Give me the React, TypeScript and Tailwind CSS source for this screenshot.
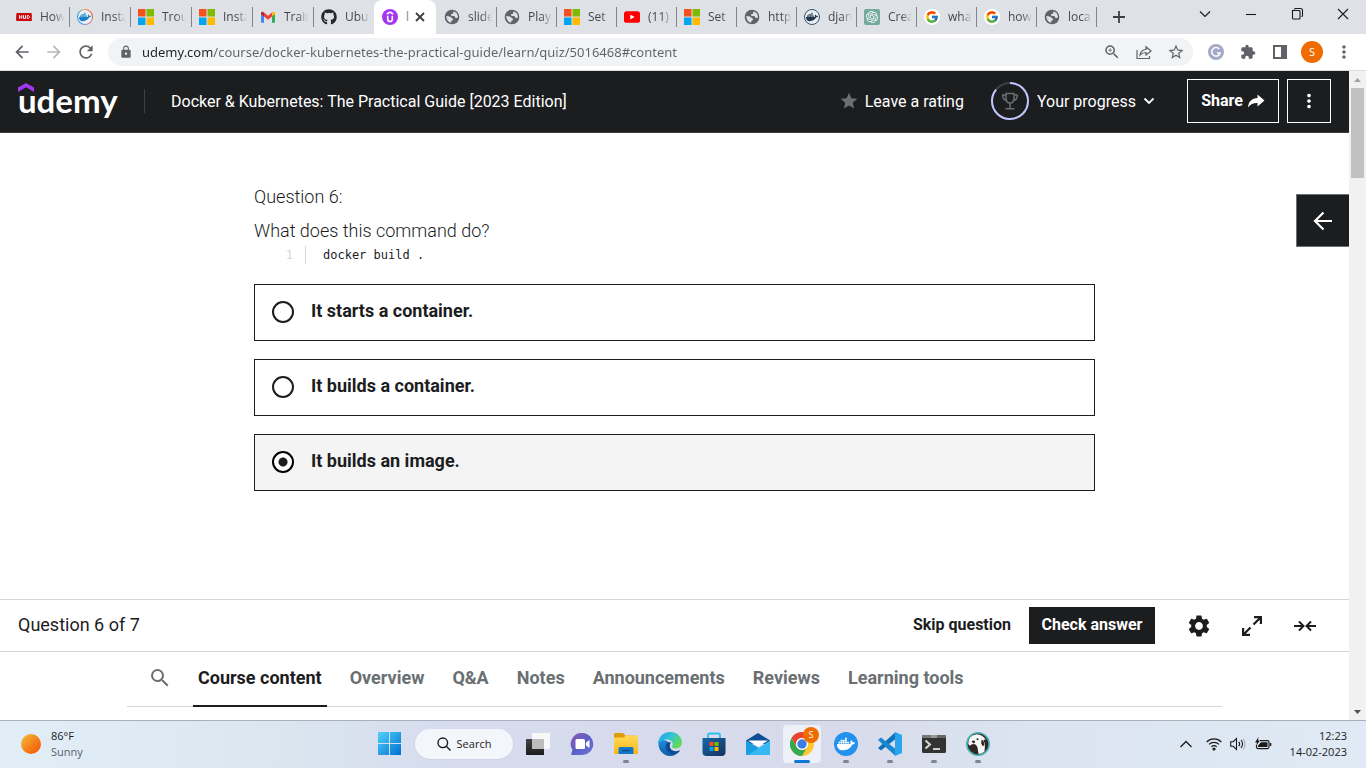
import React, { useState } from "react";
import {
  MdArrowBack, MdArrowForward, MdRefresh, MdLock, MdZoomIn, MdStarBorder, MdExtension, MdMoreVert,
  MdSettings, MdSearch, MdStar,
} from "react-icons/md";
import { FaGithub, FaDocker } from "react-icons/fa";
import { FcGoogle } from "react-icons/fc";
import { SiOpenai } from "react-icons/si";

const ui = "font-['Open_Sans','Noto_Sans',sans-serif]";
const brand = "font-[Roboto,'Liberation_Sans',sans-serif]";

/* ---------- favicons ---------- */

const Microsoft = () => (
  <svg viewBox="0 0 16 16" className="size-4">
    <path fill="#f4511e" d="M0 0h7.5v7.5H0z" />
    <path fill="#80bb02" d="M8.5 0H16v7.5H8.5z" />
    <path fill="#03a5f0" d="M0 8.5h7.5V16H0z" />
    <path fill="#ffb902" d="M8.5 8.5H16V16H8.5z" />
  </svg>
);

const Globe = () => (
  <svg viewBox="0 0 16 16" className="size-4">
    <circle cx="8" cy="8" r="7.300" fill="#5f6368" />
    <path fill="#dee1e6" d="M9.500 2.300 12.500 4Q14 6 14 8.500l-2.300.7-1-1.900-3.500-.5-.2-1.500 2-.6zM2.200 7l3.600.4 2.700 2 .8 1.400-1.800 1-.5 2Q2.500 12.500 2.200 7z" />
  </svg>
);

const Hud = () => (
  <svg viewBox="0 0 16 16" className="size-4">
    <path fill="#c80a10" d="M1.2 4h13.6q1 0 1 1v7H1q-1 0-1-1l.3-6q0-1 .9-1z" />
    <path fill="none" stroke="#fff" strokeWidth=".9" d="M3.500 6.200v3.600M5.800 6.200v3.600M3.500 8h2.300M7.500 6.200v3.200h2V6.200M11.200 6.600v2.800h1.300l.8-.7V7.200l-.8-.6z" />
  </svg>
);

const DockerRing = () => (
  <span className="flex size-4 items-center justify-center rounded-full bg-[conic-gradient(#ff8a3c,#f25022,#e07a9a,#3d9ae8,#2b9be8,#f5b45c)]">
    <span className="flex size-3.5 items-center justify-center rounded-full bg-[#e6f1fa]">
      <FaDocker className="size-3 text-[#1d7fc4]" />
    </span>
  </span>
);

const DockerDark = () => (
  <span className="flex size-4 items-center justify-center rounded-full border-[1.5px] border-[#33566f] bg-[#e9eff3]">
    <FaDocker className="size-3 text-[#22384d]" />
  </span>
);

const Gmail = () => (
  <svg viewBox="0 0 16 16" className="size-4">
    <path fill="#4285f4" d="M1 4v9q0 .7.8.7H4V7z" />
    <path fill="#34a853" d="M15 4v9q0 .7-.8.7H12V7z" />
    <path fill="#ea4335" d="M4 3.6 8 6.8l4-3.2v4L8 10.8 4 7.6z" />
    <path fill="#c5221f" d="M1 4.2C1 2.6 2.8 2.200 3.800 3.400L4 3.600v4L1 5.300z" />
    <path fill="#fbbc04" d="M15 4.2c0-1.600-1.800-2-2.800-.8l-.2.2v4l3-2.300z" />
  </svg>
);

const UdemyIcon = () => (
  <svg viewBox="0 0 16 16" className="size-4">
    <circle cx="8" cy="8" r="8" fill="#a435f0" />
    <path fill="none" stroke="#fff" strokeWidth="1.6" d="M4.800 5 8 3.100 11.200 5M5.700 6.700v3.500a2.300 2.300 0 0 0 4.600 0V6.700" />
  </svg>
);

const YouTube = () => (
  <svg viewBox="0 0 16 16" className="size-4">
    <rect y="2.200" width="16" height="11.600" rx="2.600" fill="#f00" />
    <path fill="#fff" d="M6.300 5.500v5l4.300-2.500z" />
  </svg>
);

const OpenAi = () => (
  <span className="flex size-4 items-center justify-center rounded-xs bg-[#75a99c]">
    <SiOpenai className="size-3 text-white" />
  </span>
);

const Google = () => (
  <span className="flex size-4 items-center justify-center rounded-full bg-white">
    <FcGoogle className="size-3.5" />
  </span>
);

const GitHub = () => <FaGithub className="size-4 text-[#24292f]" />;

const leftTabs = [
  { t: "How", i: Hud }, { t: "Insta", i: DockerRing }, { t: "Trou", i: Microsoft },
  { t: "Insta", i: Microsoft }, { t: "Train", i: Gmail }, { t: "Ubu", i: GitHub },
];
const rightTabs = [
  { t: "slide", i: Globe }, { t: "Play", i: Globe }, { t: "Set", i: Microsoft }, { t: "(11)", i: YouTube },
  { t: "Set", i: Microsoft }, { t: "http", i: Globe }, { t: "djan", i: DockerDark }, { t: "Crea", i: OpenAi },
  { t: "wha", i: Google }, { t: "how", i: Google }, { t: "loca", i: Globe },
];

function Tab({ title, icon: Icon, width, divider = true }: { title: string; icon: React.FC; width: string; divider?: boolean }) {
  return (
    <button className={`flex ${width} h-full shrink-0 items-center pl-2`}>
      <span className="shrink-0"><Icon /></span>
      <span className="ml-2 w-[27px] overflow-hidden whitespace-nowrap text-left [mask-image:linear-gradient(90deg,#000_50%,transparent_90%)]">
        {title}
      </span>
      {divider && <span className="-mr-px ml-auto h-5 w-px bg-[#808387]" />}
    </button>
  );
}

function TabStrip() {
  return (
    <div className="flex h-[34px] items-center bg-[#dee1e6] pl-2 text-[12px] leading-4 text-[#45494d]">
      {leftTabs.map((tab, n) => (
        <Tab key={n} title={tab.t} icon={tab.i} width="w-[61px]" divider={n < 5} />
      ))}
      <div className="flex h-full w-[62px] shrink-0 items-center rounded-t-lg bg-white pl-2">
        <UdemyIcon />
        <span className="ml-2 w-1 text-[#a08060]">l</span>
        <button aria-label="Close tab" className="ml-0.5 flex size-4 items-center justify-center">
          <svg viewBox="0 0 10 10" className="size-2.5"><path d="m1 1 8 8M9 1 1 9" stroke="#3c4043" strokeWidth="1.800" /></svg>
        </button>
      </div>
      {rightTabs.map((tab, n) => (
        <Tab key={n} title={tab.t} icon={tab.i} width="w-[60px]" />
      ))}
      <button aria-label="New tab" className="ml-[15px] flex size-4 items-center justify-center">
        <svg viewBox="0 0 12 12" className="size-3"><path d="M6 0v12M0 6h12" stroke="#3c4043" strokeWidth="1.800" /></svg>
      </button>
      <div className="mb-1.5 ml-auto flex items-center gap-[30px] pr-[15px]">
        {[
          ["Search tabs", "M3 5.500 8 10.500 13 5.500"],
          ["Minimize", "M3 8.500h10"],
          ["Restore", "M5.500 3.500V3q0-.5 1-.5H11.500q2 0 2 2V9.500q0 1-1 1M3.500 4.500h6.500q1 0 1 1v6.500q0 1-1 1H4.500q-1 0-1-1z"],
          ["Close", "m3 3 10 10M13 3 3 13"],
        ].map(([label, d]) => (
          <button key={label} aria-label={label} className="size-4">
            <svg viewBox="0 0 16 16" className="size-4"><path d={d} fill="none" stroke="#1b1b1b" strokeWidth="1.100" /></svg>
          </button>
        ))}
      </div>
    </div>
  );
}

function Toolbar() {
  return (
    <div className="flex h-[37px] items-center border-b border-[#dadce0] bg-white pl-3 text-[#5f6368]">
      <button aria-label="Back"><MdArrowBack className="size-5" /></button>
      <button aria-label="Forward" className="ml-3"><MdArrowForward className="size-5 text-[#b4b7ba]" /></button>
      <button aria-label="Reload" className="ml-3"><MdRefresh className="size-5" /></button>
      <div className="ml-3 flex h-7 flex-1 items-center rounded-full bg-[#f1f3f4] pr-2 pl-[11px]">
        <MdLock className="size-3.5" />
        <input
          aria-label="Address"
          defaultValue="udemy.com/course/docker-kubernetes-the-practical-guide/learn/quiz/5016468#content"
          className="ml-[9px] min-w-0 flex-1 bg-[linear-gradient(90deg,#202124_70px,#5f6368_70px)] bg-clip-text font-['Noto_Sans',sans-serif] text-[13px] leading-5 text-transparent outline-none"
        />
        <div className="flex items-center gap-3.5">
          <button aria-label="Zoom"><MdZoomIn className="size-[18px]" /></button>
          <button aria-label="Share page">
            <svg viewBox="-1 -1 18 18" className="size-[18px]" fill="none" stroke="#5f6368" strokeWidth="1.200">
              <path d="M1 6v8.500h12.500V12M4 11c.5-3.500 2.500-5.300 6-5.500V2.800L15 7l-5 4V8.500C7.500 8.500 5.500 9.300 4 11z" />
            </svg>
          </button>
          <button aria-label="Bookmark"><MdStarBorder className="size-[18px]" /></button>
        </div>
      </div>
      <div className="flex items-center gap-4 pr-3.5 pl-[15px]">
        <button aria-label="Grammar extension">
          <svg viewBox="0 0 16 16" className="size-4">
            <circle cx="8" cy="8" r="8" fill="#a3aac9" />
            <path d="M11.300 5A4.300 4.300 0 1 0 12.200 9H9" fill="none" stroke="#fff" strokeWidth="1.500" />
          </svg>
        </button>
        <button aria-label="Extensions"><MdExtension className="size-4" /></button>
        <button aria-label="Side panel">
          <svg viewBox="0 0 16 16" className="size-4"><path fillRule="evenodd" fill="#5f6368" d="M1 1h14v14H1zM3 3v10h6V3z" /></svg>
        </button>
        <button className="-mx-[3px] flex size-[22px] items-center justify-center rounded-full bg-[#ef6c00] text-[11px] text-white">S</button>
        <button aria-label="Browser menu" className="-mx-0.5"><MdMoreVert className="size-5" /></button>
      </div>
    </div>
  );
}

function Header() {
  return (
    <header className="flex h-[62px] items-center border-b border-[#3e4143] bg-[#1c1d1f] px-[18px] pb-px text-white">
      <a href="#home" className="flex w-[126px] flex-col pb-1.5">
        <svg viewBox="0 0 16 9" className="-mb-1.5 h-[9px] w-4"><path fill="#a435f0" d="M8 0 16 4.600V9L8 4.300 0 9V4.600z" /></svg>
        <span className="font-[Lato] text-[33px] leading-7 font-bold">udemy</span>
      </a>
      <span className="h-6 w-px bg-[#3e4143]" />
      <a href="#course" className="ml-[26px] pt-0.5 text-[16px]">Docker &amp; Kubernetes: The Practical Guide [2023 Edition]</a>
      <div className="ml-auto flex items-center">
        <button className="flex items-center gap-1.5 text-[16px]">
          <MdStar className="size-5 text-[#6a6f73]" /><span className="pt-0.5">Leave a rating</span>
        </button>
        <button className="ml-[27px] flex items-center text-[16px]">
          <svg viewBox="0 0 38 38" className="size-[38px]" fill="none">
            <circle cx="19" cy="19" r="18" stroke="#3e4143" strokeWidth="2" />
            <circle cx="19" cy="19" r="18" stroke="#c0c4fc" strokeWidth="2" pathLength="100" strokeDasharray="86 14" transform="rotate(-90 19 19)" />
            <path stroke="#6a6f73" strokeWidth="1.500" d="M15 11.500h8v4.500c0 3-1.500 5-4 5s-4-2-4-5zM15 13h-3.300c0 3.300 1 5 3.700 5.300M23 13h3.300c0 3.300-1 5-3.700 5.300M19 21v5.500M14.500 26.700h9" />
          </svg>
          <span className="ml-2 pt-0.5">Your progress</span>
          <svg viewBox="0 0 12 12" className="ml-[7px] size-3"><path d="m1.500 3.500 4.500 4.500 4.500-4.500" fill="none" stroke="#fff" strokeWidth="1.800" /></svg>
        </button>
        <button className="ml-8 flex h-11 w-[92px] items-center justify-center gap-1 border border-white text-[16px] font-bold">
          Share
          <svg viewBox="0 0 18 16" className="h-4 w-[18px]"><path fill="#fff" d="M1 14.500C1.500 8.500 4.500 5.500 10.500 5V1.500L17.500 7.500l-7 6V10C6.500 9.800 3.500 11 1 14.500z" /></svg>
        </button>
        <button aria-label="More options" className="ml-2 flex size-11 items-center justify-center border border-white">
          <MdMoreVert className="size-[22px]" />
        </button>
      </div>
    </header>
  );
}

const answers = ["It starts a container.", "It builds a container.", "It builds an image."];

function Quiz() {
  const [picked, setPicked] = useState(2);
  return (
    <main className="relative flex-1 bg-white">
      <div className="mx-auto max-w-[841px] pt-[52px] text-[#1c1d1f]">
        <p className="text-[18px] leading-6 font-light">Question 6:</p>
        <p className="mt-2.5 text-[18px] leading-6 font-light">What does this command do?</p>
        <div className="mt-[3px] flex h-[18px] items-center font-['DejaVu_Sans_Mono',monospace] text-[12px]">
          <span className="w-[39px] text-right text-[#d1d7dc]">1</span>
          <code className="ml-3 border-l border-[#d1d7dc] pl-[17px] font-['DejaVu_Sans_Mono',monospace] leading-[18px]">docker build .</code>
        </div>
        <fieldset className="mt-5 flex flex-col gap-[18px]">
          {answers.map((a, n) => (
            <label key={a} className="flex h-[57px] cursor-pointer items-center border border-[#1c1d1f] pb-0.5 pl-[17px] has-checked:bg-[#f4f4f4]">
              <input
                type="radio"
                name="answer"
                checked={picked === n}
                onChange={() => setPicked(n)}
                className="size-[22px] appearance-none rounded-full border-2 border-[#1c1d1f] bg-white checked:border-black checked:bg-[radial-gradient(circle,#1c1d1f_4px,#fff_5px)]"
              />
              <span className="ml-[17px] pb-0.5 text-[18px] leading-6 font-bold">{a}</span>
            </label>
          ))}
        </fieldset>
      </div>
      <button aria-label="Open sidebar" className="absolute top-[61px] right-0 flex h-[53px] w-[53px] items-center justify-center border border-r-0 border-[#6a6f73] bg-[#1c1d1f]">
        <svg viewBox="0 0 20 20" className="size-5"><path d="M19 10H2M10.500 1.500 2 10l8.500 8.500" fill="none" stroke="#fff" strokeWidth="2.200" /></svg>
      </button>
    </main>
  );
}

function QuizFooter() {
  return (
    <div className="flex h-[53px] items-center border-y border-[#d1d7dc] bg-white pr-8 pl-[18px] text-[#1c1d1f]">
      <span className="pb-0.5 text-[18px]">Question 6 of 7</span>
      <button className="ml-auto pb-0.5 text-[16px] font-bold">Skip question</button>
      <button className="ml-[18px] h-[37px] w-[126px] bg-[#1c1d1f] pb-0.5 text-[16px] font-bold text-white">Check answer</button>
      <button aria-label="Settings" className="ml-[31px]"><MdSettings className="size-[26px]" /></button>
      <button aria-label="Full screen" className="ml-[29px]">
        <svg viewBox="0 0 22 22" className="size-[22px]" fill="none" stroke="#1c1d1f" strokeWidth="2.200">
          <path d="M13 2.100h6.900V9M19.500 2.500 12.500 9.500M9 19.900H2.100V13M2.500 19.500 9.500 12.500" />
        </svg>
      </button>
      <button aria-label="Collapse" className="ml-[30px]">
        <svg viewBox="0 0 24 12" className="h-3 w-6" fill="none" stroke="#1c1d1f" strokeWidth="2">
          <path d="M1 6h9M6 1.500 10.500 6 6 10.500M23 6h-9M18 1.500 13.500 6 18 10.500" />
        </svg>
      </button>
    </div>
  );
}

const sections = ["Course content", "Overview", "Q&A", "Notes", "Announcements", "Reviews", "Learning tools"];

function CourseTabs() {
  return (
    <div className="bg-white px-[127px] pb-[13px]">
      <nav className="flex h-[55px] items-stretch border-b border-[#d1d7dc]">
        <button aria-label="Search course" className="mr-[21px] ml-[21px] pb-0.5"><MdSearch className="size-6 text-[#6a6f73]" /></button>
        <div className="flex gap-[18px]">
          {sections.map((s, n) => (
            <button
              key={s}
              className={
                n === 0
                  ? "-mb-px border-b-2 border-[#1c1d1f] px-[5px] pb-0.5 text-[18px] font-bold text-[#1c1d1f]"
                  : "-mb-px border-b-2 border-transparent px-[5px] pb-0.5 text-[18px] font-bold text-[#6a6f73]"
              }
            >
              {s}
            </button>
          ))}
        </div>
      </nav>
    </div>
  );
}

function Scrollbar() {
  return (
    <div className="flex w-[17px] flex-col items-center bg-[#f1f1f1]">
      <svg viewBox="0 0 17 17" className="size-[17px]"><path fill="#a3a3a3" d="m8.500 7 3.500 4H5z" /></svg>
      <div className="h-[90px] w-[13px] bg-[#c1c1c1]" />
      <svg viewBox="0 0 17 17" className="mt-auto size-[17px]"><path fill="#505050" d="m8.500 11 3.500-4H5z" /></svg>
    </div>
  );
}

/* ---------- taskbar ---------- */

const appIcon = "size-6";

const TaskView = () => (
  <svg viewBox="0 0 24 24" className={appIcon}>
    <defs><linearGradient id="tv" x2="0" y2="1"><stop stopColor="#444" /><stop offset="1" stopColor="#1c1c1c" /></linearGradient></defs>
    <rect x="6" y="1" width="18" height="16" fill="#f8f8f8" />
    <rect x="0" y="7" width="18" height="16" rx=".5" fill="url(#tv)" />
    <rect x="6" y="7" width="12" height="10" fill="#bdbdbd" />
  </svg>
);

const Chat = () => (
  <svg viewBox="0 0 24 24" className={appIcon}>
    <defs><linearGradient id="ch" x2="1" y2="1"><stop stopColor="#8e5bb5" /><stop offset=".5" stopColor="#5a5fc6" /><stop offset="1" stopColor="#6f74dc" /></linearGradient></defs>
    <path fill="url(#ch)" d="M12.500 1A11 11 0 1 1 12 23H2q-1 0-.8-1l1.300-4A11 11 0 0 1 12.500 1z" />
    <rect x="5.500" y="7" width="9.500" height="10" rx="1.500" fill="#fff" />
    <path fill="#fff" d="m16 10.500 3.500-2.500v8L16 13.500z" />
  </svg>
);

const Explorer = () => (
  <svg viewBox="0 0 24 24" className={appIcon}>
    <defs><linearGradient id="ex" x2="0" y2="1"><stop stopColor="#ffd95a" /><stop offset="1" stopColor="#fbb713" /></linearGradient></defs>
    <path fill="#e09b0c" d="M1 1h8l2.500 2.500H22V8H0V2q0-1 1-1z" />
    <path fill="url(#ex)" d="M10 5.500l1.500-2H23q1 0 1 1V22H0V6q0-.5.500-.5z" />
    <path fill="#1478c8" d="M6 15h12q1.500 0 1.500 1.500V22h-15v-5.500Q4.500 15 6 15z" />
    <path stroke="#0c4f96" strokeWidth="1.500" d="M8 18.500h8" />
  </svg>
);

const Edge = () => (
  <svg viewBox="0 0 24 24" className={appIcon}>
    <defs>
      <linearGradient id="ea" x2="1" y2=".6"><stop stopColor="#1f9fe0" /><stop offset=".5" stopColor="#2fc3d8" /><stop offset="1" stopColor="#66dc50" /></linearGradient>
      <linearGradient id="eb" x2="0" y2="1"><stop stopColor="#2391e0" /><stop offset="1" stopColor="#0c59a4" /></linearGradient>
    </defs>
    <path fill="url(#eb)" d="M1 8C-1.500 16 4.500 24 12 24c4 0 7-1.500 9.500-4.700-5 2-9.500-.3-9.800-5C11.500 10 8 7 1 8z" />
    <path fill="#0c4a94" d="M9 10c-2.500 4-1 10 4.500 12 3 .8 6-.5 8.300-2.900.4-.6 0-1-.5-.7-5 2-9.300-.3-9.600-4.400-.1-1.500.6-2.700 1.300-3.500z" />
    <path fill="url(#ea)" d="M.3 10C1.300 4 6 0 12 0c7 0 12 5 12 10.300 0 4.200-3 6.200-6 6.200-2.300 0-4.200-.8-4.200-1.700 0-.6 1-.9 1-2.700 0-2-2.300-4.600-5.800-4.600-4 0-7.700 2-8.700 4.500z" />
  </svg>
);

const Store = () => (
  <svg viewBox="0 0 24 24" className={appIcon}>
    <defs><linearGradient id="st" x2="1" y2="1"><stop stopColor="#1669a8" /><stop offset="1" stopColor="#16305c" /></linearGradient></defs>
    <path fill="none" stroke="#2cc0f0" strokeWidth="1.800" d="M6 7V3q0-1.500 1.500-1.500h9Q18 1.500 18 3v4" />
    <path fill="url(#st)" d="M.5 6h23v14q0 4-4 4h-15q-4 0-4-4z" />
    <path fill="#f25022" d="M7.500 10h4v4h-4z" /><path fill="#7fba00" d="M12.500 10h4v4h-4z" />
    <path fill="#00a4ef" d="M7.500 15h4v4h-4z" /><path fill="#ffb900" d="M12.500 15h4v4h-4z" />
  </svg>
);

const Mail = () => (
  <svg viewBox="0 0 24 24" className={appIcon}>
    <path fill="#0d4f94" d="M0 8.500 12 1l12 7.500V12H0z" />
    <path fill="#fff" d="M2 8.500h20L12 15z" />
    <path fill="#1b9de2" d="M0 8.500 15 17l-1 6H0z" />
    <path fill="#36b9f2" d="M24 8.500 2 23h22z" />
  </svg>
);

const Chrome = () => (
  <svg viewBox="0 0 24 24" className={appIcon}>
    <circle cx="12" cy="12" r="12" fill="#fcc934" />
    <path fill="#ea4335" d="M1.600 6A12 12 0 0 1 22.400 6H12a6 6 0 0 0-5.200 9z" />
    <path fill="#34a853" d="M1.600 6A12 12 0 0 0 12 24l5.200-9A6 6 0 0 1 6.800 15z" />
    <circle cx="12" cy="12" r="6" fill="#fff" />
    <circle cx="12" cy="12" r="4.700" fill="#3b7de8" />
  </svg>
);

const DockerApp = () => (
  <span className="flex size-6 items-center justify-center rounded-full bg-[#2391ee]"><FaDocker className="size-[18px] text-white" /></span>
);

const VsCode = () => (
  <svg viewBox="0 0 24 24" className={appIcon}>
    <path fill="#0d72b8" d="M17.500 0v7L3 18.500 0 16z" />
    <path fill="#1a86cc" d="M0 8l3-2.500L17.500 17v7z" />
    <path fill="#2ba4ee" d="m17 0 7 3v18l-7 3z" />
  </svg>
);

const Terminal = () => (
  <svg viewBox="0 0 24 24" className={appIcon}>
    <rect y="3" width="24" height="18" rx="1.500" fill="#333" />
    <path fill="#777" d="M1.500 3h7v3H0V4.500Q0 3 1.500 3z" /><path fill="#999" d="M8.500 3h7v3h-7z" /><path fill="#666" d="M15.500 3h7Q24 3 24 4.500V6h-8.500z" />
    <path fill="none" stroke="#d8d8d8" strokeWidth="2" d="m3.500 8.500 4.500 4-4.500 4" />
    <path stroke="#fff" strokeWidth="1.500" d="M11 17h7" />
  </svg>
);

const Beaver = () => (
  <svg viewBox="0 0 24 24" className={appIcon}>
    <circle cx="12" cy="12" r="11.200" fill="#2e2622" stroke="#49b3b5" strokeWidth="1.600" />
    <path fill="#f8f8f6" d="M2.200 12Q2 3.500 11 2.300q6 .5 9 5.700-1.500-1-2.500 0l1.500 4.500-.5 7q-3 2.500-6 2.500l-1-6.500q-1-3-3-3.500-4 0-4.500 2z" />
    <path fill="#2e2622" d="M5.500 9.500q1.500-1.500 3.300-.8l.2 1.800-1.500 1zM15.500 7.500l2 1.500 1 4-1.800 1.200-1.500-2.700z" />
    <circle cx="11.500" cy="7.300" r="1" fill="#2e2622" />
  </svg>
);

const apps: { name: string; icon: React.FC; running?: boolean; active?: boolean }[] = [
  { name: "Task view", icon: TaskView },
  { name: "Chat", icon: Chat },
  { name: "File Explorer", icon: Explorer, running: true },
  { name: "Edge", icon: Edge },
  { name: "Store", icon: Store },
  { name: "Mail", icon: Mail },
  { name: "Chrome", icon: Chrome, active: true },
  { name: "Docker Desktop", icon: DockerApp, running: true },
  { name: "Code", icon: VsCode, running: true },
  { name: "Terminal", icon: Terminal, running: true },
  { name: "DBeaver", icon: Beaver, running: true },
];

function Taskbar() {
  return (
    <footer className={`${ui} grid h-12 grid-cols-[1fr_auto_1fr] items-center border-t border-[#aab0ba] bg-[linear-gradient(90deg,#e1eef8,#dbe6f0_20%,#d6dcee_33%,#d7daeb_60%,#dbe4f0_75%,#dfeaf5)] pb-0.5 pl-0.5 text-[12px] text-[#1b1b1b]`}>
      <button className="flex items-center gap-2.5 pl-[19px] text-left text-[11px] leading-4">
        <span className="size-5 rounded-full bg-[linear-gradient(135deg,#f0c13a,#f7630c_80%)]" />
        <span><span className="block">86°F</span><span className="block text-[#5a5f66]">Sunny</span></span>
      </button>
      <div className="flex items-center gap-1.5">
        <button aria-label="Start" className="flex size-[38px] items-center justify-center pr-0.5">
          <svg viewBox="0 0 23 23" className="size-[23px]">
            <defs><linearGradient id="win" gradientUnits="userSpaceOnUse" x2="23" y2="23"><stop stopColor="#4fd2fb" /><stop offset="1" stopColor="#0070d0" /></linearGradient></defs>
            <path fill="url(#win)" d="M0 0h11v11H0zM12 0h11v11H12zM0 12h11v11H0zM12 12h11v11H12z" />
          </svg>
        </button>
        <button className="flex h-[30px] w-[98px] items-center justify-center gap-1.5 rounded-full bg-[#f3f6fb] pt-px text-[11px] shadow-xs">
          <svg viewBox="0 0 14 14" className="size-3.5" fill="none" stroke="#1b1b1b" strokeWidth="1.400"><circle cx="5.800" cy="5.800" r="4.800" /><path d="m9.300 9.300 4.200 4.200" /></svg>
          Search
        </button>
        {apps.map(({ name, icon: Icon, running, active }) => (
          <button
            key={name}
            aria-label={name}
            className={active ? "relative flex size-[38px] items-center justify-center rounded-sm bg-[#eef0f8]" : "relative flex size-[38px] items-center justify-center"}
          >
            <Icon />
            {running && <span className="absolute bottom-0 h-[3px] w-1.5 rounded-full bg-[#80848e]" />}
            {active && <span className="absolute bottom-0 h-[3px] w-4 rounded-full bg-[#0a78d4]" />}
            {active && <span className="absolute top-0.5 right-0.5 flex size-4 items-center justify-center rounded-full bg-[#ef6c00] text-[9px] text-white">S</span>}
          </button>
        ))}
      </div>
      <div className="flex items-center justify-end pr-[19px]">
        <svg viewBox="0 0 12 12" className="size-3" fill="none" stroke="#1b1b1b" strokeWidth="1.300"><path d="m.5 9 5.500-5.500L11.500 9" /></svg>
        <svg viewBox="0 0 16 14" className="ml-3.5 h-3.5 w-4" fill="none" stroke="#1b1b1b" strokeWidth="1.200">
          <path d="M.7 5a10.300 10.300 0 0 1 14.600 0M3 7.400a7 7 0 0 1 10 0M5.300 9.800a3.800 3.800 0 0 1 5.400 0" /><circle cx="8" cy="12" r="1" fill="#1b1b1b" />
        </svg>
        <svg viewBox="0 0 16 14" className="ml-2 h-3.5 w-4" fill="none" stroke="#1b1b1b" strokeWidth="1.100">
          <path d="M.7 4.700h2.500L6.500 1.500v11L3.200 9.300H.7zM8.800 4.800q1.700 2.200 0 4.400M11 3q3 4 0 8" /><path stroke="#a5abb5" d="M13 1.500q4 5.500 0 11" />
        </svg>
        <svg viewBox="0 0 18 14" className="ml-2 h-3.5 w-[18px]">
          <path fill="none" stroke="#1b1b1b" strokeWidth="1.200" d="M6 3.600h7.500q1.500 0 1.500 1.500v5q0 1.500-1.500 1.500H4q-1.500 0-1.500-1.500V8" />
          <path fill="#1b1b1b" d="M7 5.200h6.500v4.800h-9.500V8.500zM16 6h1.300v3H16zM4.500 0 1 5.500h2L2 9l4-5.500H4z" />
        </svg>
        <div className="ml-[18px] text-right text-[11px] leading-4">
          <div>12:23</div>
          <div>14-02-2023</div>
        </div>
      </div>
    </footer>
  );
}

export default function App() {
  return (
    <div className="flex h-screen flex-col overflow-hidden">
      <div className={ui}>
        <TabStrip />
        <Toolbar />
      </div>
      <div className={`${brand} flex min-h-0 flex-1`}>
        <div className="flex min-w-0 flex-1 flex-col">
          <Header />
          <Quiz />
          <QuizFooter />
          <CourseTabs />
        </div>
        <Scrollbar />
      </div>
      <Taskbar />
    </div>
  );
}
